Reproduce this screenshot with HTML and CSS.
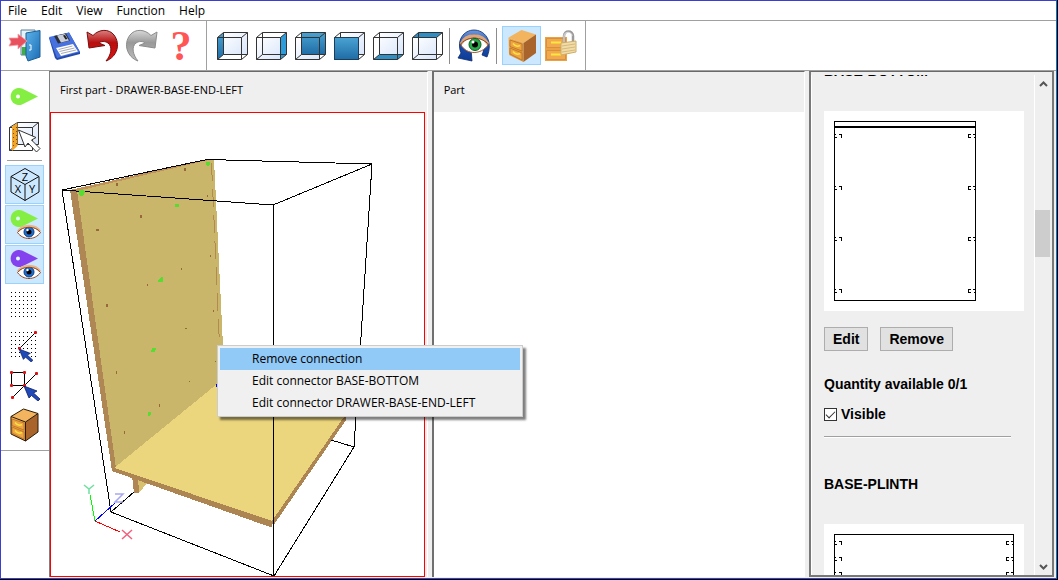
FILE: index.html
```html
<!DOCTYPE html>
<html lang="en">
<head>
    <meta charset="UTF-8">
    <title>Part connections</title>
    <link rel="stylesheet" href="styles.css">
</head>
<body>

    <!-- shared shapes -->
    <svg class="defs" width="0" height="0" aria-hidden="true">
        <defs>
            <linearGradient id="blue" x1="0" y1="0" x2="0" y2="1"><stop offset="0" stop-color="#4aa3d2"/><stop offset="1" stop-color="#1f6ca6"/></linearGradient>
            <linearGradient id="glass" x1="0" y1="0" x2="1" y2="1"><stop offset="0" stop-color="#ffffff"/><stop offset="1" stop-color="#d9e6fb"/></linearGradient>
            <linearGradient id="red" x1="0" y1="0" x2="0" y2="1"><stop offset="0" stop-color="#d98080"/><stop offset=".4" stop-color="#b80f0f"/><stop offset="1" stop-color="#e01010"/></linearGradient>
            <linearGradient id="gray" x1="0" y1="0" x2="0" y2="1"><stop offset="0" stop-color="#d8d8d8"/><stop offset=".4" stop-color="#999999"/><stop offset="1" stop-color="#bdbdbd"/></linearGradient>
            <linearGradient id="door" x1="0" y1="0" x2="1" y2="1"><stop offset="0" stop-color="#5cb4ea"/><stop offset="1" stop-color="#1c6cb4"/></linearGradient>
            <linearGradient id="ring" x1="0" y1="0" x2="0" y2="1"><stop offset="0" stop-color="#6f98da"/><stop offset=".5" stop-color="#1a4fae"/><stop offset="1" stop-color="#0d3a94"/></linearGradient>
            <linearGradient id="wood" x1="0" y1="0" x2="1" y2="1"><stop offset="0" stop-color="#f3b25a"/><stop offset="1" stop-color="#d98a2c"/></linearGradient>
            <pattern id="dots" x="6" y="7" width="4" height="4" patternUnits="userSpaceOnUse"><rect width="1" height="1"/></pattern>
            <symbol id="wire" viewBox="0 0 39 39">
                <path d="M4.500 11.500h24v22h-24zM10.500 6.500h24v22h-24zM4.500 11.500l6-5M28.500 11.500l6-5M28.500 33.500l6-5M4.500 33.500l6-5" fill="none" stroke="#333"/>
            </symbol>
            <symbol id="eye" viewBox="0 0 24 16">
                <path d="M0 8.500C4 1 19-1 24 8.500 18 17 6 17 0 8.500z" fill="#fff"/>
                <circle cx="12" cy="8" r="5" fill="#1f6fd0" stroke="#123c80"/>
                <circle cx="12" cy="8" r="2.500" fill="#000"/>
                <circle cx="10.500" cy="6" r="1.200" fill="#fff"/>
                <path d="M1 7.500C5 0 19 0 23 7.500" fill="none" stroke="#e8b48c" stroke-width="2.500"/>
                <path d="M.5 8.500C5 1.500 19 1.500 23.500 8.500 18 16.500 6 16.500 .5 8.500z" fill="none" stroke="#8a4422"/>
            </symbol>
            <symbol id="cabinet" viewBox="0 0 39 39">
                <path d="M19.500 4 34 8.500 21.500 17 6.500 11.500z" fill="#f2b45e"/>
                <path d="M6.500 11.500 21.500 17V36L7 29z" fill="url(#wood)"/>
                <path d="M21.500 17 34 8.500V27L21.500 36z" fill="#a8642a"/>
                <path d="M8 14l12 4v7L8 20.500zM8 22l12 5v7L8 28z" fill="#eda446" stroke="#c47a24"/>
                <path d="M11 17.500q3 4 7 2M11 25.500q3 4 7 2" fill="none" stroke="#ffe23c" stroke-width="1.500"/>
            </symbol>
            <symbol id="pointer" viewBox="0 0 16 15">
                <path d="M0 0 13 5 9.500 7 16 13 14 15 7.500 9.500 5 12z" fill="#1f49b8" stroke="#0b2060" stroke-width=".8"/>
            </symbol>
        </defs>
    </svg>

    <div class="window">
        <nav class="menubar">
            <button>File</button>
            <button>Edit</button>
            <button>View</button>
            <button>Function</button>
            <button>Help</button>
        </nav>

        <div class="toolbar">
            <div class="group">
                <button class="tool" aria-label="Exit">
                    <svg viewBox="0 0 39 39">
                        <path d="M16 4h14v25H16z" fill="#e4f2fa" stroke="#5b7f98"/>
                        <path d="M17 21h7v8h-7z" fill="#3fae49"/>
                        <path d="M21 7 35 4.500V31L23 35l-2-5z" fill="url(#door)" stroke="#1d5f96"/>
                        <path d="M24 19h2v5h-2" fill="none" stroke="#fff"/>
                        <path d="M4 12h9V8l9 7-9 8v-4l-9 1 2-4z" fill="#e8505e" stroke="#f4a0a6" stroke-width=".8"/>
                    </svg>
                </button>
                <button class="tool" aria-label="Save">
                    <svg viewBox="0 0 39 39">
                        <path d="M5 12 25 6.500 36 26v2L13 34 11 32z" fill="#2449a8"/>
                        <path d="M5 11 25 6.500 36 26 13 32z" fill="#4671de"/>
                        <path d="M10 10 22 7.500l4 7-12 3z" fill="#2a2f3a"/>
                        <path d="M13 9.500 21 8l4 6.500-8 2z" fill="#c9ced8"/>
                        <path d="M19 9.500l2-.5 2.500 4-2 .5z" fill="#222"/>
                        <path d="M12 22 29 18l5 7.500L17 30z" fill="#fff"/>
                        <path d="M14.500 23.500l14-3.500M15.500 25.500l15-3.500M17 27.500l15-3.500" stroke="#a7abb5"/>
                    </svg>
                </button>
                <button class="tool" aria-label="Undo">
                    <svg viewBox="0 0 39 39">
                        <path d="M4 6l6 3.500C16 3 26 2.500 31 9c7 9 3 22-8 26 5-6 7-14 2-18-3-2-7-2-9 0l6 2.500L6 22z" fill="url(#red)" stroke="#7a0d0d"/>
                    </svg>
                </button>
                <button class="tool" aria-label="Redo">
                    <svg viewBox="0 0 39 39">
                        <path d="M35 6l-6 3.500C23 3 13 2.500 8 9c-7 9-3 22 8 26-5-6-7-14-2-18 3-2 7-2 9 0l-6 2.500L33 22z" fill="url(#gray)" stroke="#8c8c8c"/>
                    </svg>
                </button>
                <button class="tool" aria-label="Help">
                    <svg class="help" viewBox="0 0 39 39"><text class="question" x="20" y="34" text-anchor="middle">?</text></svg>
                </button>
            </div>
            <div class="group views">
                <button class="tool" aria-label="Left view">
                    <svg viewBox="0 0 39 39"><path d="M10 7h24v21H10z" fill="url(#glass)"/><path d="M4.500 11.500l6-5v22l-6 5z" fill="url(#blue)"/><use href="#wire"/></svg>
                </button>
                <button class="tool" aria-label="Right view">
                    <svg viewBox="0 0 39 39"><path d="M5 12h24v21H5z" fill="url(#glass)"/><path d="M28.500 11.500l6-5v22l-6 5z" fill="#2f9bd8"/><use href="#wire"/></svg>
                </button>
                <button class="tool" aria-label="Back view">
                    <svg viewBox="0 0 39 39"><path d="M5 12h24v21H5z" fill="url(#glass)"/><path d="M10.500 6.500h24v22h-24z" fill="url(#blue)"/><use href="#wire"/></svg>
                </button>
                <button class="tool" aria-label="Front view">
                    <svg viewBox="0 0 39 39"><path d="M10 7h24v21H10z" fill="url(#glass)"/><use href="#wire"/><path d="M4.500 11.500h24v22h-24z" fill="url(#blue)" stroke="#1c3c58"/></svg>
                </button>
                <button class="tool" aria-label="Bottom view">
                    <svg viewBox="0 0 39 39"><path d="M10 7h24v21H10z" fill="url(#glass)"/><path d="M4.500 33.500l6-5h24l-6 5z" fill="#2f8ec4"/><use href="#wire"/></svg>
                </button>
                <button class="tool" aria-label="Top view">
                    <svg viewBox="0 0 39 39"><path d="M5 12h24v21H5z" fill="url(#glass)"/><path d="M4.500 11.500l6-5h24l-6 5z" fill="#2f8ec4"/><use href="#wire"/></svg>
                </button>
                <span class="divider"></span>
                <button class="tool" aria-label="Rotate view">
                    <svg viewBox="0 0 39 39">
                        <path d="M6 27C1 14 9 4 19 4s20 10 13 27l-5-2C33 15 26 9 19 9S7 15 11 24l5-1 1 12L3 32z" fill="url(#ring)" stroke="#0b2c70" stroke-width=".8"/>
                        <path d="M6 19C11 9 27 9 33 19 26 29 12 29 6 19z" fill="#fff" stroke="#a4582c"/>
                        <path d="M6 18C11 7 27 7 33 18" fill="none" stroke="#dba67c" stroke-width="3"/>
                        <path d="M5 19C11 10 27 10 34 19" fill="none" stroke="#8a4a26" stroke-width="1"/>
                        <circle cx="20" cy="18.500" r="6" fill="#2cab4a" stroke="#0e5a24"/>
                        <circle cx="20" cy="18.500" r="3" fill="#000"/>
                        <circle cx="18" cy="16" r="1.500" fill="#fff"/>
                    </svg>
                </button>
                <span class="divider"></span>
                <button class="tool selected" aria-label="Show part">
                    <svg viewBox="0 0 39 39"><use href="#cabinet"/></svg>
                </button>
                <button class="tool" aria-label="Lock part">
                    <svg viewBox="0 0 39 39">
                        <path d="M4 11h22v24H4z" fill="#eba145"/>
                        <path d="M5.500 12.500h19v9h-19zM5.500 24.500h19v9h-19z" fill="#f0a94e" stroke="#d8903a"/>
                        <path d="M10 16.500h10M10 28.500h10" stroke="#ffe83c" stroke-width="2"/>
                        <path d="M23 17V10c0-6 9-6 9 0v7" fill="none" stroke="#9a9a9a" stroke-width="2.500"/>
                        <path d="M23 16V10c0-5 8-5 8 0" fill="none" stroke="#e6e6e6"/>
                        <path d="M20 17l15-2v11l-15 3z" fill="#f0dca8" stroke="#d0ad68"/>
                        <path d="M21 20l13-2M21 23l13-2M21 26l13-2" stroke="#d8b878"/>
                    </svg>
                </button>
            </div>
        </div>

        <div class="workspace">
            <div class="sidebar">
                <button class="tool" aria-label="Connector">
                    <svg viewBox="0 0 39 39"><path d="M33 19.500 17 11.500A8.500 8.500 0 1 0 17 27.500z" fill="#84ee42"/><circle cx="13" cy="19.500" r="2" fill="#fff"/></svg>
                </button>
                <button class="tool" aria-label="Select face">
                    <svg viewBox="0 0 39 39">
                        <path d="M11 6h23v22H11z" fill="url(#glass)"/>
                        <path d="M4.500 10.500h23v23h-23zM12.500 5.500h21v22h-21zM4.500 10.500l8-5M27.500 10.500l6-5M4.500 33.500l8-6" fill="none" stroke="#333"/>
                        <path d="M7 9.500 12.500 6v23L7 34z" fill="#f0a52c"/>
                        <path d="M8.500 12v20M11.500 10v19" stroke="#7a4a10" stroke-dasharray="1 3"/>
                        <path d="M13.500 13 31 20.500 26.500 23 35 31.500 31.500 35 23 26 20 30z" fill="#fff" stroke="#333"/>
                    </svg>
                </button>
                <span class="rule"></span>
                <button class="tool selected" aria-label="Axes">
                    <svg viewBox="0 0 39 39">
                        <path d="M20 3.500 34 11.500V27L20 35.500 6 27V11.500zM6 11.500 20 19.500 34 11.500M20 19.500v16" fill="none" stroke="#111"/>
                        <g class="axes"><text x="20" y="16">Z</text><text x="13" y="28">X</text><text x="27" y="28">Y</text></g>
                    </svg>
                </button>
                <button class="tool selected" aria-label="Show green connectors">
                    <svg viewBox="0 0 39 39"><path d="M33 13.500 17 5.500A8.500 8.500 0 1 0 17 21.500z" fill="#84ee42"/><circle cx="13" cy="13.500" r="2" fill="#dff"/><use href="#eye" x="12" y="19" width="24" height="16"/></svg>
                </button>
                <button class="tool selected" aria-label="Show purple connectors">
                    <svg viewBox="0 0 39 39"><path d="M33 13.500 17 5.500A8.500 8.500 0 1 0 17 21.500z" fill="#8442ee"/><circle cx="13" cy="13.500" r="2" fill="#dff"/><use href="#eye" x="12" y="19" width="24" height="16"/></svg>
                </button>
                <button class="tool" aria-label="Grid">
                    <svg viewBox="0 0 39 39"><path d="M6 7h26v26H6z" fill="url(#dots)"/></svg>
                </button>
                <button class="tool" aria-label="Snap to grid">
                    <svg viewBox="0 0 39 39">
                        <path d="M6 7h26v26H6z" fill="url(#dots)"/>
                        <path d="M14.500 23.500l16-16" stroke="#000"/>
                        <path d="M13 23h3M14.500 22v3M29 7.500h3M30.500 6v3" stroke="#d11" stroke-width="2"/>
                        <use href="#pointer" x="14" y="24" width="14" height="13"/>
                    </svg>
                </button>
                <button class="tool" aria-label="Snap to point">
                    <svg viewBox="0 0 39 39">
                        <path d="M6.500 7.500h13v13h-13zM7.500 32.500l24-24" fill="none" stroke="#000"/>
                        <path d="M5 7.500h3M6.500 6v3M18 7.500h3M19.500 6v3M5 20.500h3M6.500 19v3M18 20.500h3M19.500 19v3M30 8.500h3M31.500 7v3M6 32.500h3M7.500 31v3" stroke="#d11" stroke-width="2"/>
                        <use href="#pointer" x="19" y="21" width="16" height="15"/>
                    </svg>
                </button>
                <button class="tool" aria-label="Solid">
                    <svg viewBox="0 0 39 39">
                        <use href="#cabinet" x="-1"/>
                        <path d="M18.500 4 33 8.500V27L20.500 36 6 29V11.500zM6 11.500 20.500 17 33 8.500M20.500 17v19" fill="none" stroke="#2a1a08"/>
                    </svg>
                </button>
            </div>

            <div class="panels">
                <section class="panel">
                    <h2>First part - DRAWER-BASE-END-LEFT</h2>
                    <div class="scene">
                        <svg width="373" height="463" viewBox="51 113 373 463" shape-rendering="crispEdges">
                            <!-- side board -->
                            <path d="M70 190 207 159h7l9 187-5 38L114 468z" fill="#c9b66b"/>
                            <path d="M70 190 207 159h6L77 191z" fill="#c0915a"/>
                            <path d="M70 190h7l39 278-4 3z" fill="#af8755"/>
                            <path d="M211.500 163 219.500 345" stroke="#b08a50" stroke-dasharray="18 8"/>
                            <!-- plinth and bottom board -->
                            <path d="M138 478h13l-12 15z" fill="#d8c26f"/>
                            <path d="M132 476h6l1 17h-5z" fill="#af8755"/>
                            <path d="M114 468 217 384 260 350 390 350 272 523z" fill="#ebd67d"/>
                            <path d="M112 468h3L272 521v6l-2 0L112 471z" fill="#ad8552"/>
                            <path d="M272 521 346 414v6L273 526z" fill="#ad8552"/>
                            <!-- bounding box -->
                            <path d="M62 190 207 159.500 372 164 273 205zM62 190 111 512 274 576 354 447 331 440M273 205l1 371M372 164 354 447M111 512l23-20" fill="none" stroke="#000"/>
                            <!-- holes -->
                            <path d="M116 183h2v3h-2zM184 168h2v3h-2zM96 229h3v2h-3zM140 215h2v3h-2zM106 304h2v3h-2zM147 284h1v2h-1zM181 268h1v2h-1zM207 195h1v2h-1zM210 255h1v2h-1zM213 310h1v2h-1zM116 371h1v3h-1zM185 328h2v1h-2zM189 381h1v1h-1zM159 404h1v3h-1zM124 431h1v3h-1zM215 361h1v1h-1z" fill="#96683a"/>
                            <path d="M79 190h5l1 2-2 4h-3l-1-3zM206 162h4v2l-2 3-2-2zM175 204h4v3h-4zM158 281l3-4h2v5h-5zM152 348h4l-1 4h-4zM148 412h3v3l-3 1z" fill="#58dc34"/>
                            <path d="M216 384h2v3h-2z" fill="#00f"/>
                            <!-- axes -->
                            <path d="M95 521 90 495" stroke="#0f0"/>
                            <path d="M95 521l20-18" stroke="#00f"/>
                            <path d="M95 521l25 11" stroke="#f00"/>
                            <g fill="none" shape-rendering="auto" stroke-width="1.500">
                                <path d="M84 485l5 4 5-4M89 489v5" stroke="#6fe0a0"/>
                                <path d="M115 494h8l-8 8h8" stroke="#a8a8ee"/>
                                <path d="M122 530l10 9M132 530l-10 9" stroke="#f25f7c"/>
                            </g>
                        </svg>
                    </div>
                    <div class="context-menu" role="menu">
                        <button class="active" role="menuitem">Remove connection</button>
                        <button role="menuitem">Edit connector BASE-BOTTOM</button>
                        <button role="menuitem">Edit connector DRAWER-BASE-END-LEFT</button>
                    </div>
                </section>

                <section class="panel">
                    <h2>Part</h2>
                    <div class="empty"></div>
                </section>

                <section class="parts">
                    <div class="viewport">
                        <div class="list">
                            <h3>BASE-BOTTOM</h3>
                            <svg class="drawing" viewBox="0 0 200 200" shape-rendering="crispEdges">
                                <defs>
                                    <path id="mark-left" d="M11 .500h1M11 3.500h2M15 .500h2.500v2M17 3.500h1" fill="none" stroke="#000"/>
                                    <path id="mark-right" d="M149 .500h3M150 3.500h2M147 .500h-2.500v3h2" fill="none" stroke="#000"/>
                                </defs>
                                <path d="M10.500 10.500h141v179h-141z" fill="none" stroke="#000"/>
                                <path d="M10 16h142" stroke="#000" stroke-width="2"/>
                                <use href="#mark-left" y="23"/><use href="#mark-right" y="23"/>
                                <use href="#mark-left" y="75"/><use href="#mark-right" y="75"/>
                                <use href="#mark-left" y="126"/><use href="#mark-right" y="126"/>
                                <use href="#mark-left" y="178"/><use href="#mark-right" y="178"/>
                            </svg>
                            <div class="actions">
                                <button>Edit</button>
                                <button>Remove</button>
                            </div>
                            <p>Quantity available 0/1</p>
                            <label class="visible"><input type="checkbox" checked>Visible</label>
                            <hr>
                            <h3>BASE-PLINTH</h3>
                            <svg class="drawing" viewBox="0 0 200 200" shape-rendering="crispEdges">
                                <path d="M10.500 10.500h179v80h-179z" fill="none" stroke="#000"/>
                                <use href="#mark-left" y="17"/><use href="#mark-right" x="38" y="17"/>
                                <use href="#mark-left" y="33"/><use href="#mark-right" x="38" y="33"/>
                                <use href="#mark-left" y="48"/><use href="#mark-right" x="38" y="48"/>
                            </svg>
                        </div>
                    </div>
                    <div class="scrollbar">
                        <button aria-label="Scroll up"><svg viewBox="0 0 9 6"><path d="M1 5l3.500-3.500L8 5" fill="none" stroke="#555" stroke-width="2"/></svg></button>
                        <div class="track"><span class="thumb"></span></div>
                        <button aria-label="Scroll down"><svg viewBox="0 0 9 6"><path d="M1 1l3.500 3.500L8 1" fill="none" stroke="#555" stroke-width="2"/></svg></button>
                    </div>
                </section>
            </div>
        </div>
    </div>

</body>
</html>
```
FILE: styles.css
```css
* {
    box-sizing: border-box;
}
body {
    margin: 0;
    background-color: #000;
    font-family: "Open Sans", "Noto Sans", sans-serif;
    font-size: 12px;
    color: #000;
}
button {
    font: inherit;
    color: inherit;
    background: none;
    border: none;
    padding: 0;
}
h2, h3, p {
    margin: 0;
}
.defs {
    position: absolute;
}
.window {
    height: calc(100vh - 1px);
    margin-right: 1px;
    display: flex;
    flex-direction: column;
    border: 1px solid #3a3fd0;
    border-right-color: #0078d7;
    background-color: #fff;
}

/* menu and toolbar */
.menubar {
    display: flex;
    height: 20px;
    border-bottom: 1px solid #a0a0a0;
}
.menubar button {
    padding: 0 7px;
    line-height: 18px;
}
.toolbar {
    display: flex;
    border-bottom: 1px solid #a0a0a0;
}
.group {
    display: flex;
    align-items: center;
    padding: 5px 6px 5px 4px;
    border-right: 1px solid #a0a0a0;
}
.views {
    padding: 5px 5px 5px 6px;
}
.tool {
    width: 39px;
    height: 39px;
    border: 1px solid transparent;
}
.tool svg {
    display: block;
    width: 39px;
    height: 39px;
    margin: -1px;
}
.tool.selected {
    background-color: #cce8ff;
    border-color: #99d1ff;
}
.divider {
    width: 1px;
    height: 36px;
    margin: 0 5px 0 2px;
    background-color: #8c8c8c;
}
.tool .help {
    overflow: visible;
}
.question {
    font-family: "Liberation Serif", serif;
    font-size: 42px;
    font-weight: bold;
    fill: #ff5555;
}
.axes text {
    font-size: 11px;
    text-anchor: middle;
}

/* work area */
.workspace {
    flex: 1;
    min-height: 0;
    display: flex;
}
.sidebar {
    width: 48px;
    display: flex;
    flex-direction: column;
    align-items: flex-start;
    align-self: flex-start;
    gap: 1px;
    padding: 6px 4px;
    border-bottom: 1px solid #a0a0a0;
}
.rule {
    width: 35px;
    height: 1px;
    margin: 3px 2px;
    background-color: #a0a0a0;
}
.panels {
    flex: 1;
    min-width: 0;
    display: grid;
    grid-template-columns: 72fr 71fr 245px;
    gap: 4px;
    padding: 0 2px 1px 0;
    background-color: #efefef;
}
.panel {
    position: relative;
    min-width: 0;
    min-height: 0;
    display: flex;
    flex-direction: column;
    border-top: 1px solid #696969;
    border-left: 1px solid #808080;
    border-right: 1px solid #fff;
}
.panel + .panel {
    border-left: 2px solid #707070;
}
.panel h2 {
    height: 40px;
    padding-left: 10px;
    font-size: 11px;
    font-weight: normal;
    line-height: 36px;
}
.scene {
    flex: 1;
    min-height: 0;
    margin-right: 2px;
    overflow: hidden;
    border: 1px solid #f00;
    background-color: #fff;
}
.scene svg {
    display: block;
}
.empty {
    flex: 1;
    background-color: #fff;
}
.context-menu {
    position: absolute;
    z-index: 1;
    left: 167px;
    top: 273px;
    width: 306px;
    padding: 2px;
    border: 1px solid #ccc;
    background-color: #f0f0f0;
    box-shadow: 3px 3px 2px rgba(0, 0, 0, 0.5);
}
.context-menu button {
    display: block;
    width: 100%;
    padding-left: 32px;
    line-height: 22px;
    text-align: left;
}
.context-menu .active {
    background-color: #91c9f7;
}

/* parts list */
.parts {
    display: flex;
    min-width: 0;
    min-height: 0;
    padding: 3px 1px 0 0;
    border: 2px solid #787878;
    border-top: 1px solid #696969;
    font-family: "Liberation Sans", sans-serif;
    font-size: 14px;
    font-weight: bold;
    line-height: 16px;
}
.viewport {
    flex: 1;
    min-height: 0;
    overflow: hidden;
    border-left: 1px solid #fff;
}
.list {
    display: flex;
    flex-direction: column;
    align-items: flex-start;
    margin-top: -12px;
    padding-left: 12px;
}
.list h3 {
    font-size: 14px;
    line-height: 16px;
}
.drawing {
    width: 200px;
    height: 200px;
    margin: 32px 0 16px;
    background-color: #fff;
}
.actions {
    display: flex;
    gap: 12px;
}
.actions button {
    height: 24px;
    padding: 0 8px;
    border: 1px solid #adadad;
    background-color: #e1e1e1;
}
.list p {
    margin-top: 25px;
}
.visible {
    display: flex;
    align-items: center;
    gap: 4px;
    margin-top: 14px;
}
.visible input {
    appearance: none;
    width: 13px;
    height: 13px;
    margin: 0;
    border: 1px solid #333;
    background-color: #fff;
}
.visible input:checked::before {
    content: "";
    display: block;
    width: 8px;
    height: 4px;
    margin: 2px 1px;
    border-left: 1px solid #333;
    border-bottom: 1px solid #333;
    transform: rotate(-45deg);
}
.list hr {
    width: 187px;
    margin: 14px 0 38px;
    border: none;
    border-top: 1px solid #a0a0a0;
    border-bottom: 1px solid #fff;
}
.scrollbar {
    width: 17px;
    display: flex;
    flex-direction: column;
    border-left: 1px solid #fff;
}
.scrollbar button {
    height: 17px;
}
.scrollbar svg {
    display: block;
    width: 9px;
    height: 6px;
    margin: 0 auto;
}
.track {
    flex: 1;
    display: flex;
    flex-direction: column;
}
.track::before {
    content: "";
    flex: 118;
}
.track::after {
    content: "";
    flex: 301;
}
.thumb {
    width: 15px;
    height: 47px;
    background-color: #cdcdcd;
}
```
